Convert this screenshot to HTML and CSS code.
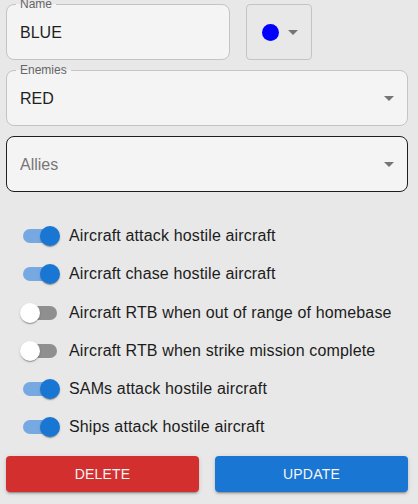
FILE: index.html
```html
<!DOCTYPE html>
<html>
<head>
<meta charset="utf-8">
<link rel="stylesheet" href="styles.css">
</head>
<body>
<div class="panel">
  <div class="row-top">
    <div class="field name-field">
      <span class="label">Name</span>
      <span class="value">BLUE</span>
    </div>
    <div class="color-btn">
      <span class="dot"></span>
      <svg class="caret" width="10" height="5" viewBox="0 0 10 5"><path d="M0 0h10L5 5z" fill="#757575"/></svg>
    </div>
  </div>
  <div class="field select">
    <span class="label">Enemies</span>
    <span class="value">RED</span>
    <svg class="caret" width="10" height="5" viewBox="0 0 10 5"><path d="M0 0h10L5 5z" fill="#757575"/></svg>
  </div>
  <div class="field select focused">
    <span class="value placeholder">Allies</span>
    <svg class="caret" width="10" height="5" viewBox="0 0 10 5"><path d="M0 0h10L5 5z" fill="#757575"/></svg>
  </div>

  <div class="toggles">
    <div class="toggle on"><span class="switch"><span class="track"></span><span class="thumb"></span></span><span class="text">Aircraft attack hostile aircraft</span></div>
    <div class="toggle on"><span class="switch"><span class="track"></span><span class="thumb"></span></span><span class="text">Aircraft chase hostile aircraft</span></div>
    <div class="toggle"><span class="switch"><span class="track"></span><span class="thumb"></span></span><span class="text">Aircraft RTB when out of range of homebase</span></div>
    <div class="toggle"><span class="switch"><span class="track"></span><span class="thumb"></span></span><span class="text">Aircraft RTB when strike mission complete</span></div>
    <div class="toggle on"><span class="switch"><span class="track"></span><span class="thumb"></span></span><span class="text">SAMs attack hostile aircraft</span></div>
    <div class="toggle on"><span class="switch"><span class="track"></span><span class="thumb"></span></span><span class="text">Ships attack hostile aircraft</span></div>
  </div>

  <div class="buttons">
    <button class="btn delete">DELETE</button>
    <button class="btn update">UPDATE</button>
  </div>
</div>
</body>
</html>
```
FILE: styles.css
```css
* { box-sizing: border-box; }
html, body {
  margin: 0;
  padding: 0;
  background: #e8e8e8;
  font-family: "Liberation Sans", Arial, sans-serif;
  color: #1f1f1f;
}
.panel {
  width: 418px;
  height: 504px;
  padding: 4px 10px 0 6px;
  display: flex;
  flex-direction: column;
}
.row-top {
  display: flex;
  gap: 16px;
}
.field {
  position: relative;
  height: 56px;
  border: 1px solid #c4c4c4;
  border-radius: 8px;
  background: #f4f4f4;
  display: flex;
  align-items: center;
  padding: 0 13px;
  font-size: 16px;
}
.name-field {
  width: 224px;
}
.select {
  margin-top: 10px;
  justify-content: space-between;
  padding-right: 13px;
}
.focused {
  border-color: #1f1f1f;
}
.label {
  position: absolute;
  top: -8px;
  left: 9px;
  padding: 0 4px;
  font-size: 12px;
  line-height: 14px;
  color: #666;
  background: linear-gradient(#e8e8e8 50%, #f4f4f4 50%);
}
.value {
  line-height: 20px;
  margin-top: 1px;
}
.placeholder {
  color: #767676;
}
.caret {
  display: block;
}
.color-btn {
  width: 66px;
  height: 56px;
  border: 1px solid #c4c4c4;
  border-radius: 4px;
  display: flex;
  align-items: center;
  justify-content: center;
  gap: 9px;
  padding-left: 2px;
}
.dot {
  width: 17px;
  height: 17px;
  border-radius: 50%;
  background: #0000ff;
}
.color-btn .caret {
  margin-top: 1px;
}
.toggles {
  margin-top: 25px;
  display: flex;
  flex-direction: column;
}
.toggle {
  height: 38px;
  display: flex;
  align-items: center;
}
.toggle:nth-child(n+3) {
  padding-top: 1px;
}
.switch {
  position: relative;
  width: 63px;
  height: 20px;
  flex: none;
}
.track {
  position: absolute;
  left: 17px;
  top: 3px;
  width: 34px;
  height: 14px;
  border-radius: 7px;
  background: #8f8f8f;
}
.thumb {
  position: absolute;
  left: 14px;
  top: 0;
  width: 20px;
  height: 20px;
  border-radius: 50%;
  background: #fff;
  box-shadow: 0 2px 1px -1px rgba(0,0,0,.2), 0 1px 1px 0 rgba(0,0,0,.14), 0 1px 3px 0 rgba(0,0,0,.12);
}
.toggle.on .track {
  background: #76a9e1;
}
.toggle.on .thumb {
  left: 34px;
  background: #1976d2;
}
.text {
  font-size: 16px;
  line-height: 20px;
  letter-spacing: 0.15px;
  color: #1c1c1c;
}
.buttons {
  margin-top: 11px;
  display: flex;
  gap: 16px;
}
.btn {
  flex: 1;
  height: 36px;
  border: none;
  border-radius: 4px;
  font-family: "Liberation Sans", Arial, sans-serif;
  font-size: 14px;
  letter-spacing: 0.2px;
  color: #f5f5f5;
  box-shadow: 0 3px 1px -2px rgba(0,0,0,.2), 0 2px 2px 0 rgba(0,0,0,.14), 0 1px 5px 0 rgba(0,0,0,.12);
  padding: 0;
}
.delete { background: #d32f2f; }
.update { background: #1976d2; }
```
